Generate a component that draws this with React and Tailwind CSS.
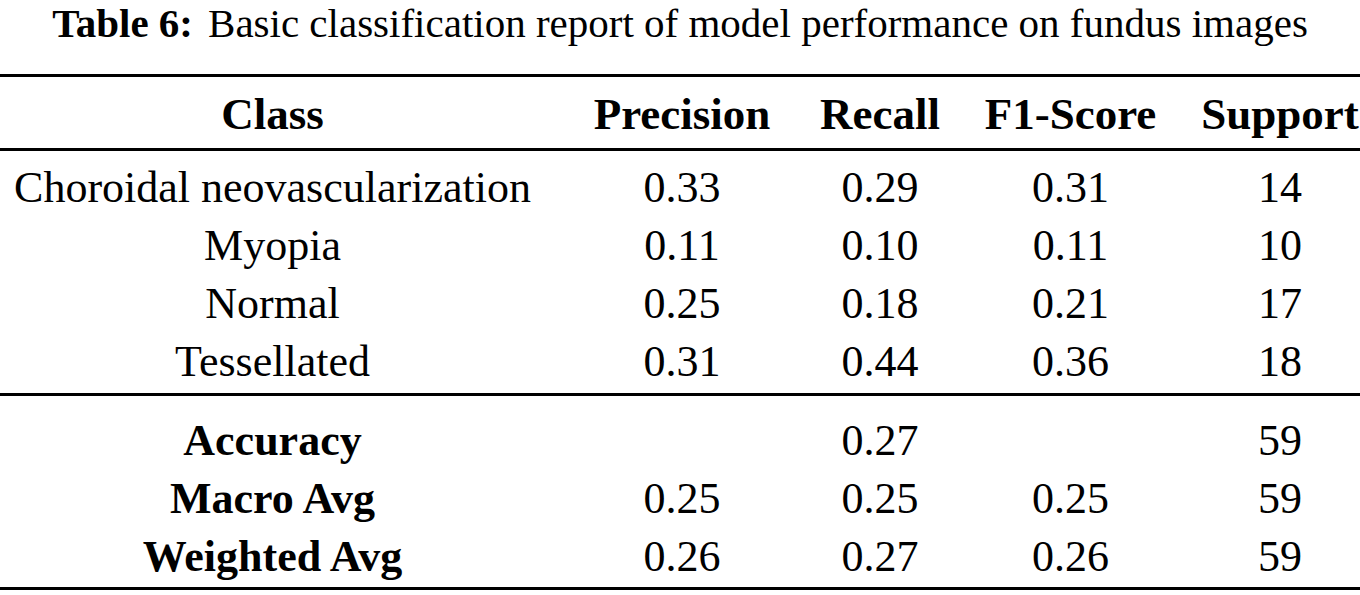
import React from "react";

const cols = "grid grid-cols-[545px_274px_122px_259px_160px] text-center";

const rows = [
  ["Choroidal neovascularization", "0.33", "0.29", "0.31", "14"],
  ["Myopia", "0.11", "0.10", "0.11", "10"],
  ["Normal", "0.25", "0.18", "0.21", "17"],
  ["Tessellated", "0.31", "0.44", "0.36", "18"],
];

const summary = [
  ["Accuracy", "", "0.27", "", "59"],
  ["Macro Avg", "0.25", "0.25", "0.25", "59"],
  ["Weighted Avg", "0.26", "0.27", "0.26", "59"],
];

export default function App() {
  return (
    <div
      className="w-[1360px] h-[595px] bg-white text-black overflow-hidden"
      style={{ fontFamily: '"Liberation Serif", "DejaVu Serif", serif' }}
    >
      <div className="h-[74px] text-center text-[41px] leading-[46px]">
        <span className="font-bold">Table 6:</span>
        <span className="ml-[15px]">
          Basic classification report of model performance on fundus images
        </span>
      </div>

      {/* header */}
      <div className="border-t-[3px] border-black">
        <div className={`${cols} h-[71px] pt-[14px] font-bold text-[45px] leading-[46px]`}>
          <div>Class</div>
          <div>Precision</div>
          <div>Recall</div>
          <div>F1-Score</div>
          <div>Support</div>
        </div>
      </div>

      {/* classes */}
      <div className="border-t-[3px] border-black pt-[8px] pb-[2px]">
        {rows.map((r) => (
          <div key={r[0]} className={`${cols} h-[58px] text-[44px] leading-[58px]`}>
            {r.map((c, i) => (
              <div key={i}>{c}</div>
            ))}
          </div>
        ))}
      </div>

      {/* averages */}
      <div className="border-t-[3px] border-black pt-[16px] pb-[1px]">
        {summary.map((r) => (
          <div key={r[0]} className={`${cols} h-[58px] text-[44px] leading-[58px]`}>
            {r.map((c, i) => (
              <div key={i} className={i === 0 ? "font-bold" : ""}>
                {c}
              </div>
            ))}
          </div>
        ))}
      </div>
      <div className="border-t-[3px] border-black"></div>
    </div>
  );
}
